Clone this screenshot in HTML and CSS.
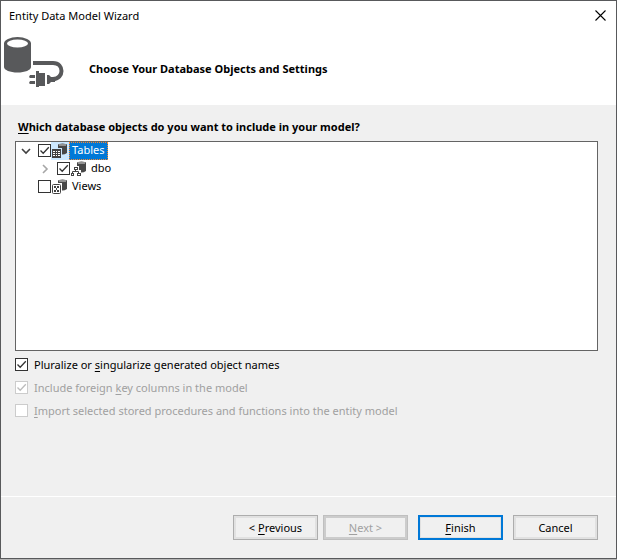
FILE: index.html
```html
<!DOCTYPE html>
<html lang="en">
<head>
<meta charset="utf-8">
<title>Entity Data Model Wizard</title>
<link rel="stylesheet" href="styles.css">
</head>
<body>
<svg class="symbols" aria-hidden="true">
  <symbol id="check" viewBox="0 0 13 13"><path d="M2.5 6.5 5.2 9.300 10.800 3.200" fill="none" stroke="currentColor" stroke-width="1.300"/></symbol>
  <symbol id="cylinder" viewBox="0 0 16 16"><path d="M6 2v8q4.500 3 9 0V2z" fill="#484848"/><ellipse cx="10.500" cy="2" rx="4.500" ry="1.500" fill="#484848"/><path d="M7 1.500h7v1H7z" fill="#ddd"/></symbol>
</svg>
<main class="window">
  <header class="header">
    <div class="titlebar">
      <span>Entity Data Model Wizard</span>
      <button class="close" type="button" aria-label="Close"><svg width="11" height="11" viewBox="0 0 11 11"><path d="M.5.5l10 10M10.500.5l-10 10" stroke="#000" stroke-width="1.100"/></svg></button>
    </div>
    <div class="banner">
      <svg class="logo" width="62" height="54" viewBox="0 0 62 54" aria-hidden="true">
        <path d="M0 6v24c0 3 6 5.500 13.500 5.500S27 33 27 30V6z" fill="#58595b"/>
        <ellipse cx="13.500" cy="6.500" rx="13.500" ry="6.500" fill="#58595b"/>
        <ellipse cx="13.500" cy="6.500" rx="10.500" ry="4" fill="#fff"/>
        <path d="M29 26h20c6 0 8.500 4 8.500 8s-3 8-8.500 8h-3" fill="none" stroke="#58595b" stroke-width="4"/>
        <path d="M32 34h3v2h6v13h-6v1h-3zM43 38h2l2 2h4v5h-4l-2 2h-2zM26 38h5v3h-5l-1-1zM26 44h5v3h-5l-1-1z" fill="#58595b"/>
      </svg>
      <h1>Choose Your Database Objects and Settings</h1>
    </div>
  </header>
  <section class="content">
    <h2><u>W</u>hich database objects do you want to include in your model?</h2>
    <ul class="tree">
      <li class="row">
        <svg class="arrow" viewBox="0 0 10 10"><path d="M1 3l4 4 4-4" fill="none" stroke="#404040" stroke-width="1.600"/></svg>
        <label class="node selected"><span class="box"><input type="checkbox" checked><svg><use href="#check"/></svg></span>
          <svg class="icon" viewBox="0 0 16 16"><use href="#cylinder"/><path d="M0 5h10v11H0z" fill="#cce8ff"/><path d="M0 6h9v9H0z" fill="#424242"/><path d="M1 8h2v1H1zM4 8h1v1H4zM6 8h2v1H6zM1 10h2v1H1zM4 10h1v1H4zM6 10h2v1H6zM1 12h2v1H1zM4 12h1v1H4zM6 12h2v1H6z" fill="#fff"/></svg><span class="name">Tables</span></label>
      </li>
      <li class="row child">
        <svg class="arrow" viewBox="0 0 10 10"><path d="M3 1l4 4-4 4" fill="none" stroke="#a6a6a6" stroke-width="1.600"/></svg>
        <label class="node"><span class="box"><input type="checkbox" checked><svg><use href="#check"/></svg></span>
          <svg class="icon" viewBox="0 0 16 16"><use href="#cylinder"/><path d="M2 5h6v4h2v7H0V9h2z" fill="#fff"/><path d="M3 6h4v3H3zM0 12h3v3H0zM6 12h4v3H6z" fill="#424242"/><path d="M1.500 12v-1.500h6V12M4.500 9v1.500" fill="none" stroke="#424242"/><path d="M4 7h2v1H4zM1 13h1v1H1zM7 13h2v1H7z" fill="#fff"/></svg><span class="name">dbo</span></label>
      </li>
      <li class="row">
        <span class="arrow"></span>
        <label class="node"><span class="box"><input type="checkbox"></span>
          <svg class="icon" viewBox="0 0 16 16"><use href="#cylinder"/><path d="M0 4h10v12H0z" fill="#fff"/><rect x=".5" y="5.500" width="8" height="9" rx="1" fill="#fff" stroke="#424242"/><path d="M2 7h2v2H2zM5 7h2v2H5zM2 11h2v2H2zM5 11h2v2H5zM4 9h1v2H4z" fill="#424242"/></svg><span class="name">Views</span></label>
      </li>
    </ul>
    <div class="options">
      <label><span class="box"><input type="checkbox" checked><svg><use href="#check"/></svg></span><span>Pluralize or <u>s</u>ingularize generated object names</span></label>
      <label class="disabled"><span class="box"><input type="checkbox" checked disabled><svg><use href="#check"/></svg></span><span>Include foreign <u>k</u>ey columns in the model</span></label>
      <label class="disabled"><span class="box"><input type="checkbox" disabled></span><span><u>I</u>mport selected stored procedures and functions into the entity model</span></label>
    </div>
  </section>
  <footer class="footer">
    <div class="pair">
      <button class="button" type="button">&lt; <u>P</u>revious</button>
      <button class="button" type="button" disabled><u>N</u>ext &gt;</button>
    </div>
    <button class="button primary" type="button"><u>F</u>inish</button>
    <button class="button" type="button">Cancel</button>
  </footer>
</main>
</body>
</html>
```
FILE: styles.css
```css
* { box-sizing: border-box; }

body {
  margin: 0;
  background: #b4b4b4;
  color: #000;
  font: 11px/15px "Noto Sans", "Open Sans", sans-serif;
}

.symbols { position: absolute; width: 0; height: 0; }

u { text-underline-offset: 2px; text-decoration-thickness: 1px; }

.window {
  display: flex;
  flex-direction: column;
  min-height: calc(100vh - 1px);
  border: 1px solid #58595b;
  background: #f0f0f0;
}

.header { background: #fff; height: 104px; }

.titlebar {
  display: flex;
  align-items: center;
  justify-content: space-between;
  height: 29px;
  padding: 0 10px 0 8px;
}

.close {
  display: flex;
  padding: 0;
  border: 0;
  background: none;
}

.banner { display: flex; padding: 7px 3px; }
.logo { flex: none; }

h1, h2 { margin: 0; font-size: 11px; line-height: 16px; font-weight: 700; }
h1 { padding: 24px 0 0 23px; }
h2 { padding-left: 3px; }

.content {
  display: flex;
  flex: 1;
  flex-direction: column;
  padding: 14px 18px 0 14px;
}

.tree {
  height: 210px;
  margin: 6px 0 0;
  padding: 0 0 0 5px;
  border: 1px solid #646464;
  background: #fff;
  list-style: none;
}

.row { display: flex; align-items: center; height: 18px; }
.child { padding-left: 19px; }
.arrow { flex: none; width: 10px; height: 10px; margin-right: 7px; }
.node { display: flex; align-items: center; height: 18px; }
.node .box { margin-bottom: 1px; }
.icon { width: 16px; height: 16px; margin: 0 1px; }
.name { padding: 0 4px 2px 3px; line-height: 16px; }
.selected { background: linear-gradient(#cce8ff, #cce8ff) 13px 0 no-repeat; }
.selected .name {
  background: #0078d7;
  color: #fff;
  outline: 1px dotted #ff8728;
  outline-offset: -1px;
}

.box { position: relative; flex: none; width: 13px; height: 13px; }
.box input {
  appearance: none;
  display: block;
  width: 13px;
  height: 13px;
  margin: 0;
  border: 1px solid #333;
  background: #fff;
}
.box svg { position: absolute; inset: 0; width: 13px; height: 13px; color: #333; }

.options { display: flex; flex-direction: column; gap: 8px; padding-top: 6px; }
.options label { display: flex; align-items: center; gap: 6px; }
.disabled { color: #a0a0a0; }
.disabled .box input { border-color: #ccc; }
.disabled .box svg { color: #bcbcbc; }

.footer {
  display: flex;
  justify-content: flex-end;
  gap: 10px;
  padding: 18px 18px;
  border-top: 1px solid #fff;
}
.pair { display: flex; gap: 5px; }

.button {
  width: 85px;
  height: 25px;
  padding: 0 0 1px;
  border: 1px solid #adadad;
  background: #f0f0f0;
  box-shadow: inset 0 0 0 2px #e1e1e1;
  color: #000;
  font: inherit;
}
.button:disabled { border-color: #bfbfbf; box-shadow: inset 0 0 0 2px #ccc; color: #a0a0a0; }
.primary { border: 2px solid #0078d7; box-shadow: inset 0 0 0 1px #e1e1e1; }
```
